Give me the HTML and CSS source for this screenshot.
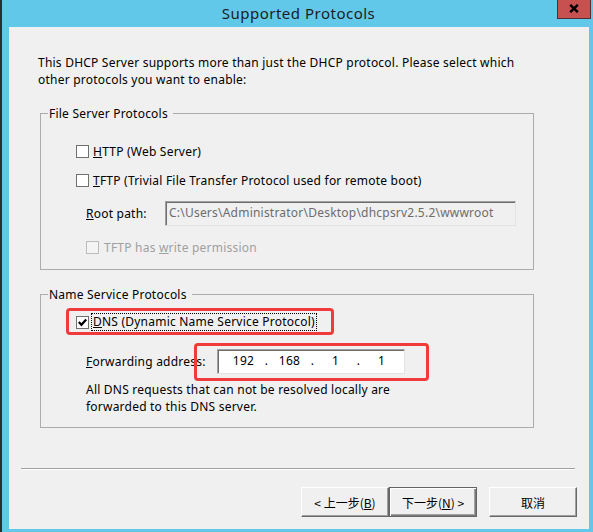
FILE: index.html
```html
<!DOCTYPE html>
<html>
<head>
<meta charset="utf-8">
<link rel="stylesheet" href="styles.css">
</head>
<body>
<div class="window">
  <div class="titlebar">
    <span class="title">Supported Protocols</span>
    <div class="close">
      <svg width="10" height="9" viewBox="0 0 10 9"><path d="M1.2 0.8 L8.8 8.2 M8.8 0.8 L1.2 8.2" stroke="#000" stroke-width="2.4" fill="none"/></svg>
    </div>
  </div>
  <div class="content">
    <p class="intro">This DHCP Server supports more than just the DHCP protocol. Please select which<br>other protocols you want to enable:</p>

    <fieldset class="group g1">
      <legend>File Server Protocols</legend>
      <div class="row r-http"><span class="cb"></span><span class="lbl"><u>H</u>TTP (Web Server)</span></div>
      <div class="row r-tftp"><span class="cb"></span><span class="lbl"><u>T</u>FTP (Trivial File Transfer Protocol used for remote boot)</span></div>
      <div class="row r-root"><span class="field-label lbl-root"><u>R</u>oot path:</span><div class="textbox tb-root">C:\Users\Administrator\Desktop\dhcpsrv2.5.2\wwwroot</div></div>
      <div class="row r-write"><span class="cb cb-dis"></span><span class="lbl lbl-dis">TFTP has <u>w</u>rite permission</span></div>
    </fieldset>

    <fieldset class="group g2">
      <legend>Name Service Protocols</legend>
      <div class="row r-dns"><span class="cb"><svg width="11" height="11" viewBox="0 0 11 11"><path d="M1.8 5 L4.4 7.8 L9.2 2.4" stroke="#000" stroke-width="2.2" fill="none"/></svg></span><span class="lbl focus"><u>D</u>NS (Dynamic Name Service Protocol)</span></div>
      <div class="row r-fwd"><span class="field-label lbl-fwd"><u>F</u>orwarding address:</span><div class="textbox tb-ip"><span class="oct">192</span><span class="oct">.</span><span class="oct">168</span><span class="oct">.</span><span class="oct">1</span><span class="oct">.</span><span class="oct">1</span></div></div>
      <p class="note">All DNS requests that can not be resolved locally are<br>forwarded to this DNS server.</p>
    </fieldset>

    <div class="separator"></div>
    <div class="buttons">
      <button class="btn">&lt; 上一步(<u>B</u>)</button>
      <button class="btn btn-default">下一步(<u>N</u>) &gt;</button>
      <button class="btn btn-cancel">取消</button>
    </div>

    <div class="hl hl-dns"></div>
    <div class="hl hl-ip"></div>
  </div>
</div>
</body>
</html>
```

FILE: styles.css
```css
* { box-sizing: border-box; }
html, body { margin: 0; padding: 0; }
body {
  width: 593px;
  height: 532px;
  overflow: hidden;
  background: #2e2e2e;
  font-family: "Noto Sans", "Noto Sans CJK SC", sans-serif;
  font-size: 12px;
  letter-spacing: 0.22px;
  color: #000;
}
.window {
  margin-left: 2px;
  height: 532px;
  background: #62c8ea;
  position: relative;
  padding-right: 2px;
}
.titlebar {
  height: 27px;
  line-height: 27px;
  text-align: center;
  font-size: 15px;
  letter-spacing: 0.5px;
  color: #1c1c1c;
  position: relative;
  padding-left: 4px;
}
.close {
  position: absolute;
  top: 0;
  left: 555px;
  width: 34px;
  height: 19px;
  background: #c75050;
  border: 1px solid #4e3030;
  border-top: none;
  display: flex;
  align-items: center;
  justify-content: center;
  padding-bottom: 2px;
}
.close svg { display: block; }
.content {
  margin-left: 7px;
  width: 580px;
  height: 502px;
  background: #f0f0f0;
  position: relative;
  padding-top: 27px;
}
.intro {
  margin: 0 0 0 29px;
  line-height: 17px;
}
.group {
  margin: 17px 0 0 31px;
  width: 494px;
  padding: 0;
  border: 1px solid #acacac;
  min-width: 0;
}
.group legend {
  margin-left: 7px;
  padding: 0 5px 0 1px;
  line-height: 17px;
  font-size: 12px;
}
.g1 { padding-bottom: 13px; }
.g2 { margin-top: 16px; padding-bottom: 12px; }
.row {
  display: flex;
  align-items: center;
  margin-left: 35px;
  line-height: 17px;
}
.r-http { margin-top: 21px; height: 17px; }
.r-tftp { margin-top: 12px; height: 17px; }
.r-root { margin-top: 12px; height: 25px; margin-left: 45px; }
.r-write { margin-top: 13px; height: 17px; margin-left: 45px; }
.r-dns { margin-top: 10px; height: 18px; }
.r-fwd { margin-top: 18px; height: 25px; margin-left: 45px; }
.cb {
  width: 13px;
  height: 13px;
  border: 1px solid #707070;
  background: #fff;
  margin-right: 4px;
  flex: none;
  display: flex;
  align-items: center;
  justify-content: center;
}
.cb svg { display: block; }
.cb-dis { border-color: #bcbcbc; background: #f4f4f4; margin-right: 5px; }
.lbl-dis { color: #a0a0a0; }
.focus {
  border: 1px dotted #000;
  height: 18px;
  line-height: 16px;
  padding: 0 1px 0 1px;
  margin-left: -2px;
}
.field-label { flex: none; }
.lbl-root { width: 79px; }
.lbl-fwd { width: 131px; }
.textbox {
  height: 25px;
  border: 1px solid;
  border-color: #a0a0a0 #e3e3e3 #e3e3e3 #a0a0a0;
  box-shadow: inset 1px 1px 0 #6d6d6d;
  line-height: 22px;
}
.tb-root {
  width: 351px;
  background: #f0f0f0;
  color: #6d6d6d;
  padding-left: 3px;
  white-space: nowrap;
  overflow: hidden;
}
.tb-ip {
  width: 188px;
  background: #fff;
  display: flex;
  padding-left: 14px;
}
.oct { width: 23px; text-align: center; }
.note {
  margin: 7px 0 0 45px;
  line-height: 17px;
}
.separator {
  margin: 40px 0 0 12px;
  width: 554px;
  height: 2px;
  border-top: 1px solid #a0a0a0;
  border-bottom: 1px solid #ffffff;
}
.buttons {
  margin-top: 17px;
  display: flex;
  justify-content: flex-end;
  padding-right: 12px;
}
.btn {
  width: 88px;
  height: 30px;
  background: #f0f0f0;
  border: 1px solid;
  border-color: #ffffff #696969 #696969 #ffffff;
  box-shadow: inset -1px -1px 0 #a0a0a0;
  font-family: "Noto Sans CJK SC", "Noto Sans", sans-serif;
  font-size: 12px;
  letter-spacing: 0;
  color: #000;
  padding: 0;
  margin: 0;
}
.btn-default {
  border: 1px solid #646464;
  box-shadow: inset 1px 1px 0 #ffffff, inset -1px -1px 0 #7a7a7a, inset -2px -2px 0 #a0a0a0;
}
.btn-cancel { margin-left: 12px; }
.hl {
  position: absolute;
  border: 3px solid #ef3b3b;
  border-radius: 4px;
}
.hl-dns { left: 57px; top: 281px; width: 268px; height: 27px; }
.hl-ip { left: 185px; top: 316px; width: 235px; height: 38px; }
```
